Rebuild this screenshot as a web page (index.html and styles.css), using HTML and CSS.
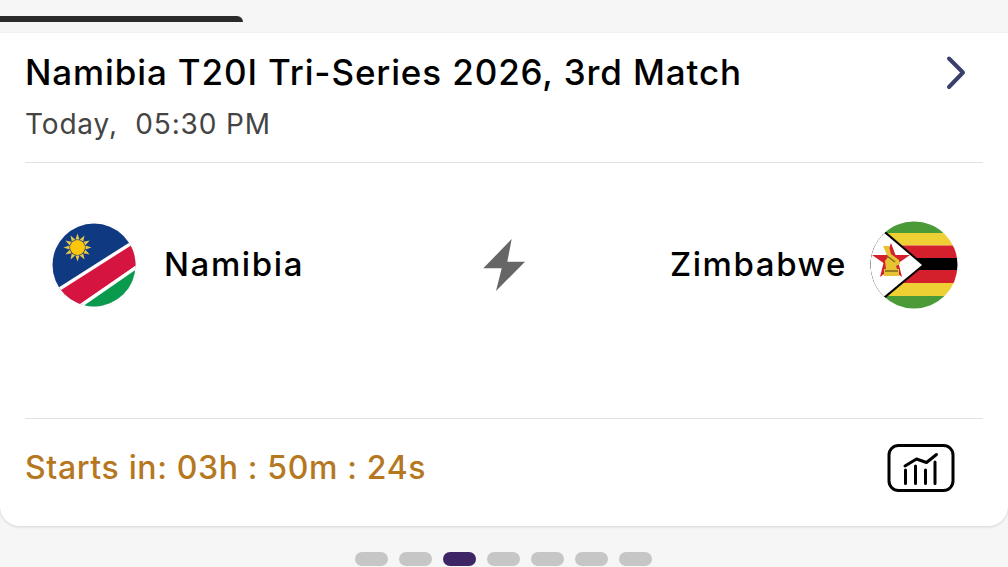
FILE: index.html
```html
<!DOCTYPE html>
<html lang="en">
<head>
  <meta charset="UTF-8" />
  <title>Match card</title>
  <link rel="stylesheet" href="styles.css">
</head>
<body>
  <div class="progress-bar"></div>

  <div class="match-card">
    <div class="card-head">
      <div>
        <div class="series-title">Namibia T20I Tri-Series 2026, 3rd Match</div>
        <div class="match-time">Today,&nbsp; 05:30 PM</div>
      </div>
      <svg class="chevron" width="24" height="36" viewBox="0 0 24 36">
        <path d="M4 3.5 L18 17.5 L4 32" />
      </svg>
    </div>

    <div class="teams">
      <div class="team">
        <svg class="flag" width="88" height="88" viewBox="0 0 88 88">
          <defs>
            <clipPath id="namClip"><circle cx="44" cy="44" r="41.5" /></clipPath>
          </defs>
          <circle cx="44" cy="44" r="43.5" fill="#fff" stroke="#f9f9f9" />
          <g clip-path="url(#namClip)">
            <rect width="88" height="88" fill="#0f3a82" />
            <polygon points="0,72 88,16 88,88 0,88" fill="#fff" />
            <polygon points="0,76 88,20 88,43 23,88 0,88" fill="#d5153f" />
            <polygon points="23,88 88,43 88,88" fill="#fff" />
            <polygon points="29,88 88,47 88,88" fill="#0a9a4d" />
          </g>
          <g transform="translate(27.5 26.5)" fill="#e8c94a">
            <polygon points="0,-14 2,-8 -2,-8" />
            <polygon points="0,-14 2,-8 -2,-8" transform="rotate(30)" />
            <polygon points="0,-14 2,-8 -2,-8" transform="rotate(60)" />
            <polygon points="0,-14 2,-8 -2,-8" transform="rotate(90)" />
            <polygon points="0,-14 2,-8 -2,-8" transform="rotate(120)" />
            <polygon points="0,-14 2,-8 -2,-8" transform="rotate(150)" />
            <polygon points="0,-14 2,-8 -2,-8" transform="rotate(180)" />
            <polygon points="0,-14 2,-8 -2,-8" transform="rotate(210)" />
            <polygon points="0,-14 2,-8 -2,-8" transform="rotate(240)" />
            <polygon points="0,-14 2,-8 -2,-8" transform="rotate(270)" />
            <polygon points="0,-14 2,-8 -2,-8" transform="rotate(300)" />
            <polygon points="0,-14 2,-8 -2,-8" transform="rotate(330)" />
            <circle r="7.5" fill="#fdc60a" />
          </g>
        </svg>
        <span class="team-name">Namibia</span>
      </div>

      <svg class="bolt" width="44" height="54" viewBox="0 0 44 54">
        <polygon points="29.7,1 1.3,30.3 19.7,30.3 14,53 43,23.7 25.3,23.7" />
      </svg>

      <div class="team team-right">
        <span class="team-name">Zimbabwe</span>
        <svg class="flag" width="88" height="88" viewBox="0 0 88 88">
          <defs>
            <clipPath id="zimClip"><circle cx="44" cy="44" r="43.5" /></clipPath>
          </defs>
          <circle cx="44" cy="44" r="43.5" fill="#fff" stroke="#f9f9f9" />
          <g clip-path="url(#zimClip)">
            <rect width="88" height="12" fill="#4a9a38" />
            <rect y="12" width="88" height="12.5" fill="#efd034" />
            <rect y="24.5" width="88" height="12.5" fill="#d3202c" />
            <rect y="37" width="88" height="12" fill="#000" />
            <rect y="49" width="88" height="13" fill="#d3202c" />
            <rect y="62" width="88" height="13" fill="#efd034" />
            <rect y="75" width="88" height="13" fill="#4a9a38" />
            <polygon points="0,-3 55,44 0,90" fill="#000" />
            <polygon points="0,0 52,44 0,87" fill="#fff" />
          </g>
          <polygon points="21,22 25.5,34 40,34 28.500,42 32,56 21,48 10,56 13.500,42 2,34 16.500,34" fill="#d3202c" />
          <path d="M13 25 h6 l2 8 l8 6 l1 4 l-4 2 l1 3 h2 v7 h-15 v-7 h2 l-1 -8 l3 -4 z" fill="#e6c332" />
          <path d="M17 35 l8 6 M15 50 h13" stroke="#7d6a1e" stroke-width="1.500" fill="none" />
        </svg>
      </div>
    </div>

    <div class="card-foot">
      <span class="countdown">Starts in: 03h : 50m : 24s</span>
      <svg class="chart-btn" width="68" height="48" viewBox="0 0 68 48">
        <rect x="2" y="1.500" width="64" height="45" rx="9.500" />
        <path d="M18 22 L29.500 15 L39.500 18.500 L49.500 10.500" />
        <path class="bars" d="M18.500 26 V39.500 M28.500 22 V39.500 M38.500 26 V39.500 M48 18 V39.500" />
      </svg>
    </div>
  </div>

  <div class="dots">
    <span class="dot"></span>
    <span class="dot"></span>
    <span class="dot dot-active"></span>
    <span class="dot"></span>
    <span class="dot"></span>
    <span class="dot"></span>
    <span class="dot"></span>
  </div>
</body>
</html>
```

FILE: styles.css
```css
html, body {
  height: 100%;
}

body {
  margin: 0;
  background: #f6f6f6;
  overflow: hidden;
  font-family: Inter, "Liberation Sans", sans-serif;
  color: #000;
}

.progress-bar {
  width: 243px;
  height: 6px;
  margin-top: 16px;
  background: #2b2b2b;
  border-top-right-radius: 6px;
}

.match-card {
  margin-top: 11px;
  height: 493px;
  background: #fff;
  border-radius: 0 0 20px 20px;
  box-shadow: 0 1px 3px rgba(0, 0, 0, 0.14);
  padding: 0 25px;
  box-sizing: border-box;
  display: flex;
  flex-direction: column;
}

.card-head {
  height: 130px;
  box-sizing: border-box;
  padding-top: 18px;
  border-bottom: 1px solid #e2e2e2;
  display: flex;
  justify-content: space-between;
  align-items: flex-start;
}

.series-title {
  font-size: 35px;
  line-height: 42px;
  font-weight: 500;
  letter-spacing: 0.87px;
}

.match-time {
  margin-top: 14px;
  font-size: 28px;
  line-height: 34px;
  letter-spacing: 0.85px;
  color: #444;
}

.chevron {
  margin: 4px 14px 0 0;
  fill: none;
  stroke: #3b3f6b;
  stroke-width: 4;
  stroke-linecap: round;
  stroke-linejoin: round;
}

.teams {
  height: 256px;
  box-sizing: border-box;
  padding: 58px 25px 0;
  border-bottom: 1px solid #e2e2e2;
  display: grid;
  grid-template-columns: 1fr auto 1fr;
  align-items: start;
}

.team {
  display: flex;
  align-items: center;
  gap: 26px;
}

.team-right {
  justify-content: flex-end;
  gap: 23px;
}

.team-name {
  font-size: 33px;
  font-weight: 500;
  letter-spacing: 1.6px;
  padding-bottom: 2px;
}

.flag {
  flex: none;
  display: block;
}

.bolt {
  display: block;
  margin-top: 17px;
  fill: #666;
}

.card-foot {
  flex: 1;
  display: flex;
  justify-content: space-between;
  align-items: flex-start;
  padding: 25px 28px 0 0;
}

.countdown {
  font-size: 32px;
  line-height: 46px;
  font-weight: 500;
  letter-spacing: 0.64px;
  color: #b5781f;
  padding-top: 1px;
}

.chart-btn {
  display: block;
  fill: none;
  stroke: #000;
  stroke-width: 3;
  stroke-linecap: round;
  stroke-linejoin: round;
}

.chart-btn .bars {
  stroke-width: 3;
}

.dots {
  margin-top: 26px;
  padding-right: 1px;
  display: flex;
  justify-content: center;
  gap: 11px;
}

.dot {
  width: 33px;
  height: 14px;
  border-radius: 7px;
  background: #c6c6c6;
}

.dot-active {
  background: #3d2566;
}
```
